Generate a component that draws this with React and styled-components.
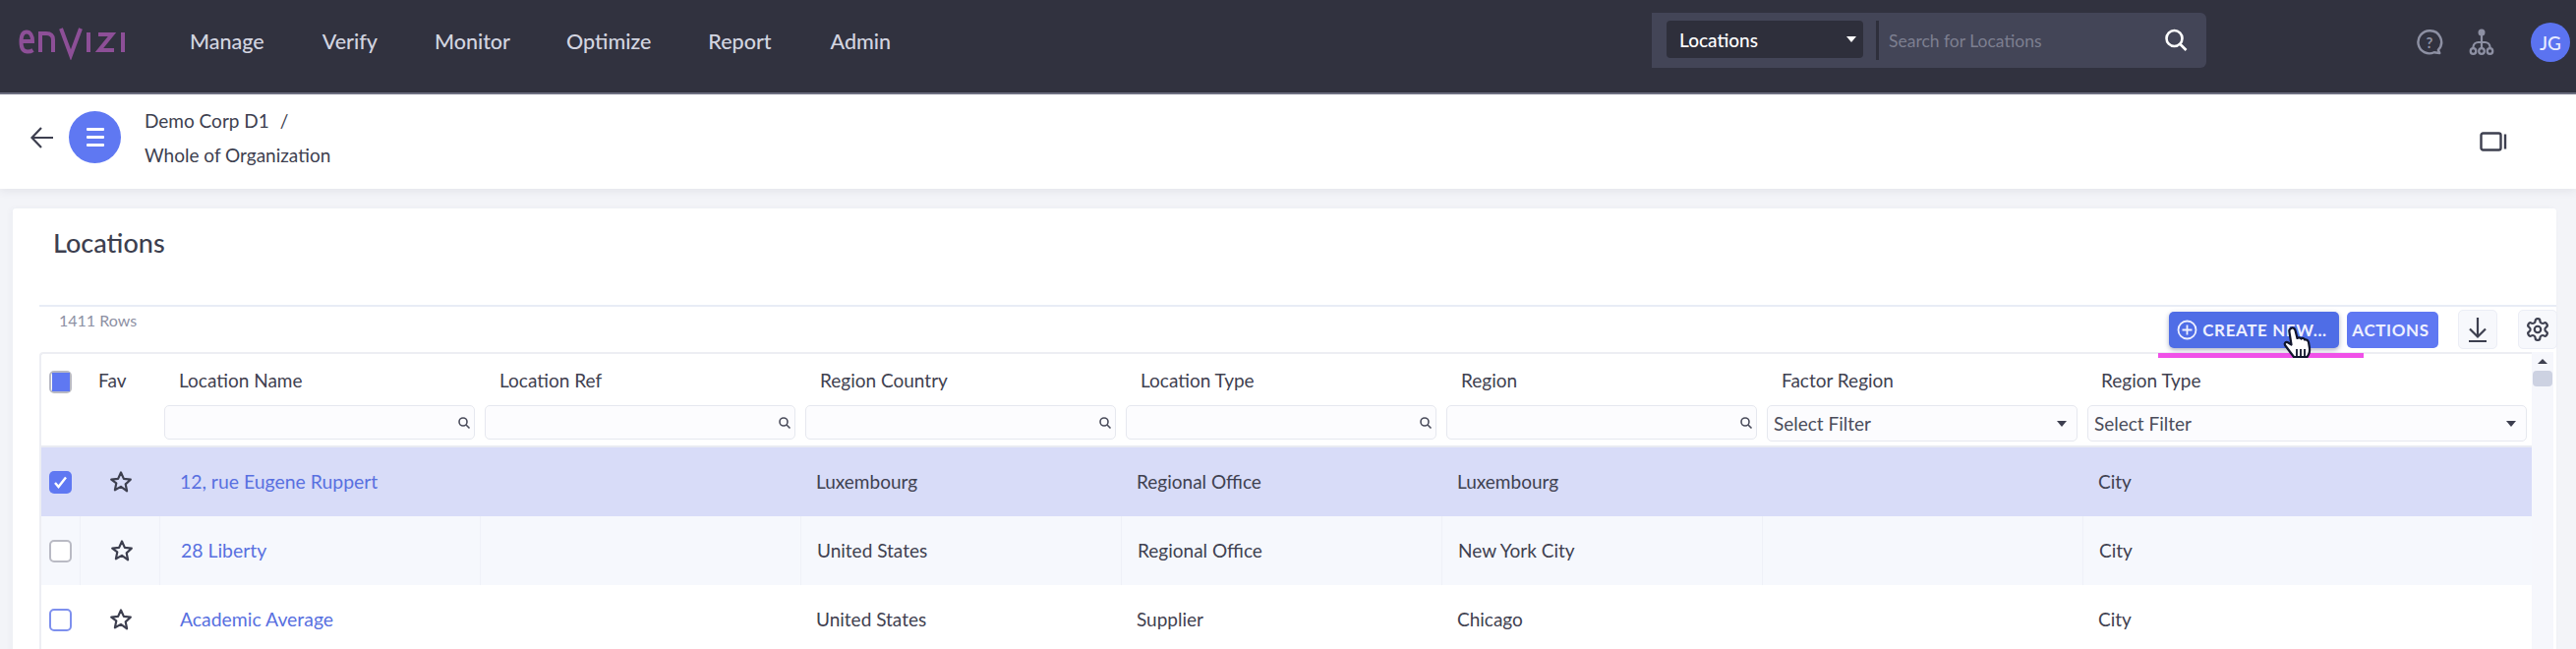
import React from "react";
import styled, { createGlobalStyle } from "styled-components";

const Global = createGlobalStyle`
  html, body { margin: 0; padding: 0; background: #f3f4f8; overflow: hidden; }
  body { font-family: "Lato", "Open Sans", sans-serif; color: #3d3f4f; }
  * { box-sizing: border-box; }
`;

const Page = styled.div`
  width: 2620px;
  height: 660px;
  overflow: hidden;
  position: relative;
`;

const TopBar = styled.header`
  height: 96px;
  background: #31323f;
  border-bottom: 2px solid #6d6f80;
  display: flex;
  align-items: flex-start;
  padding: 13px 7px 0 18px;
`;

const Logo = styled.svg`
  width: 112px;
  height: 34px;
  margin-top: 14px;
  flex: none;
`;

const Nav = styled.nav`
  display: flex;
  margin-left: 63px;
  margin-top: 16px;
  width: 1488px;
  flex: none;
`;

const NavItem = styled.a`
  font-size: 21.5px;
  font-weight: 500;
  color: #d3d5e0;
  margin-right: ${(p) => p.$gap}px;
`;

const SearchBox = styled.div`
  width: 564px;
  height: 56px;
  background: #434557;
  border-radius: 0 6px 6px 0;
  display: flex;
  align-items: flex-start;
  padding: 8px 0 0 15px;
  flex: none;
  margin-left: -1px;
`;

const ScopeSelect = styled.div`
  width: 200px;
  height: 38px;
  background: #2e2f3b;
  border-radius: 4px;
  display: flex;
  align-items: center;
  justify-content: space-between;
  padding: 0 7px 0 13px;
  color: #fff;
  font-size: 19px;
  font-weight: 500;
`;

const Caret = styled.span`
  width: 0;
  height: 0;
  border-left: ${(p) => p.$size}px solid transparent;
  border-right: ${(p) => p.$size}px solid transparent;
  border-top: ${(p) => p.$size + 1}px solid ${(p) => p.$color};
`;

const SearchDivider = styled.span`
  width: 3px;
  height: 40px;
  background: #2e2f3b;
  margin-left: 13px;
  flex: none;
`;

const Placeholder = styled.span`
  font-size: 17.5px;
  color: #7d7f90;
  margin-left: 10px;
  margin-top: 10px;
  width: 278px;
  flex: none;
`;

const SearchIcon = styled.svg`
  width: 28px;
  height: 28px;
  margin-top: 6px;
  flex: none;
`;

const TopIcons = styled.div`
  display: flex;
  align-items: center;
  margin-left: 213px;
  margin-top: 10px;
  height: 40px;
  flex: none;
`;

const TopIcon = styled.svg`
  width: ${(p) => p.$size}px;
  height: ${(p) => p.$size}px;
  margin-right: ${(p) => p.$gap}px;
  flex: none;
`;

const Avatar = styled.div`
  width: 40px;
  height: 40px;
  border-radius: 50%;
  background: #5b73f0;
  color: #e8ebff;
  font-size: 19px;
  font-weight: 500;
  display: flex;
  align-items: center;
  justify-content: center;
`;

const SubBar = styled.section`
  height: 96px;
  background: #fff;
  box-shadow: 0 3px 8px rgba(60, 64, 90, 0.08);
  display: flex;
  align-items: flex-start;
  padding: 0 70px 0 30px;
  position: relative;
`;

const BackIcon = styled.svg`
  width: 26px;
  height: 26px;
  margin-top: 31px;
  flex: none;
`;

const MenuCircle = styled.div`
  width: 53px;
  height: 53px;
  border-radius: 50%;
  background: #5f78f2;
  margin: 17px 0 0 14px;
  display: flex;
  flex-direction: column;
  align-items: center;
  justify-content: center;
  gap: 5px;
  flex: none;
`;

const MenuLine = styled.span`
  width: 18px;
  height: 3px;
  border-radius: 1px;
  background: #fff;
`;

const Crumbs = styled.div`
  margin-left: 24px;
  margin-top: 15px;
  font-size: 19px;
  display: flex;
  flex-direction: column;
  gap: 12px;
  line-height: 23px;
  color: #3d3f4f;
  flex: 1;
`;

const Slash = styled.span`
  margin-left: 11px;
`;

const VideoIcon = styled.svg`
  width: 28px;
  height: 20px;
  margin-top: 38px;
  flex: none;
`;

const Card = styled.main`
  margin: 20px 20px 0 13px;
  background: #fff;
  border-radius: 3px;
  padding: 19px 0 0 27px;
  height: 460px;
  box-shadow: -2px 0 6px rgba(60, 64, 90, 0.04);
`;

const Title = styled.h1`
  margin: 0 0 0 14px;
  font-size: 27px;
  font-weight: 500;
  line-height: 32px;
  color: #3d3f4f;
  height: 79px;
`;

const Toolbar = styled.div`
  border-top: 2px solid #e8ecf6;
  height: 48px;
  width: 2560px;
  display: flex;
  align-items: flex-start;
  position: relative;
  z-index: 2;
`;

const RowCount = styled.span`
  font-size: 16px;
  color: #8d90a3;
  margin: 4px 0 0 20px;
  width: 2146px;
  flex: none;
`;

const PrimaryButton = styled.button`
  height: 37px;
  width: ${(p) => p.$width}px;
  margin: 5px 8px 0 0;
  border: 0;
  border-radius: 5px;
  background: ${(p) => (p.$hover ? "#4f6de6" : "#5f78f2")};
  color: #eef0ff;
  font: 700 17px "Lato", sans-serif;
  letter-spacing: 0.6px;
  display: flex;
  align-items: center;
  justify-content: center;
  gap: 5px;
  padding: 0 4px 0 0;
  flex: none;
  box-shadow: ${(p) => (p.$hover ? "0 2px 5px rgba(30,40,90,.35)" : "none")};
`;

const IconButton = styled.button`
  width: 40px;
  height: 40px;
  margin: 3px 0 0 ${(p) => p.$gap}px;
  border: 1px solid #eceef6;
  border-radius: 5px;
  background: #f7f8fc;
  display: flex;
  align-items: center;
  justify-content: center;
  padding: 0;
  flex: none;
`;

const TableWrap = styled.div`
  display: flex;
  width: 2557px;
`;

const Table = styled.div`
  width: 2535px;
  border: 1px solid #edeef3;
  border-width: 2px 0 0 2px;
  border-radius: 4px 0 0 0;
  flex: none;
`;

const columns = "39px 81px 326px 326px 326px 326px 326px 326px 1fr";

const HeadRow = styled.div`
  display: grid;
  grid-template-columns: ${columns};
  height: 95px;
  border-bottom: 2px solid #e9ebf2;
`;

const HeadCell = styled.div`
  position: relative;
  display: flex;
  flex-direction: column;
  padding: ${(p) => p.$pad || "0 5px"};
`;

const HeadLabel = styled.span`
  font-size: 19px;
  line-height: 24px;
  margin-top: 15px;
  margin-left: ${(p) => p.$indent ?? 15}px;
  color: #3f4150;
  height: 37px;
  flex: none;
`;

const FilterInput = styled.div`
  height: ${(p) => (p.$select ? 37 : 35)}px;
  border: 1px solid #e6e8ef;
  border-radius: 5px;
  background: #fcfcfe;
  display: flex;
  align-items: center;
  justify-content: ${(p) => (p.$select ? "space-between" : "flex-end")};
  padding: ${(p) => (p.$select ? "0 10px 0 6px" : "0 3px 0 0")};
  font-size: 19px;
  color: #4a4c5b;
`;

const DataRow = styled.div`
  display: grid;
  grid-template-columns: ${columns};
  height: 70px;
  background: ${(p) => p.$bg};
`;

const Cell = styled.div`
  display: flex;
  align-items: center;
  padding-left: ${(p) => p.$pad ?? 16}px;
  padding-bottom: ${(p) => p.$lift ?? 2}px;
  font-size: 19px;
  color: #3f4150;
  border-left: ${(p) => (p.$line ? "1px solid #eff1f8" : "0")};
`;

const NameLink = styled.a`
  color: #5870e0;
  font-size: 19.4px;
`;

const Check = styled.span`
  width: 23px;
  height: 23px;
  border-radius: 5px;
  border: ${(p) => p.$border};
  background: ${(p) => p.$fill};
  display: flex;
  align-items: center;
  justify-content: center;
  flex: none;
`;

const MixedFill = styled.span`
  width: 18px;
  height: 19px;
  background: #5f78f2;
`;

const ScrollTrack = styled.div`
  width: 22px;
  background: #f6f7fc;
  display: flex;
  flex-direction: column;
  align-items: center;
  padding-top: 7px;
  flex: none;
`;

const ScrollUp = styled.span`
  width: 0;
  height: 0;
  border-left: 5px solid transparent;
  border-right: 5px solid transparent;
  border-bottom: 5px solid #3f4150;
`;

const ScrollThumb = styled.span`
  width: 20px;
  height: 16px;
  margin-top: 7px;
  border-radius: 4px;
  background: #cdd2e2;
`;

const PinkLine = styled.span`
  position: absolute;
  left: 2195px;
  top: 359px;
  width: 209px;
  height: 5px;
  background: #f050e8;
  z-index: 3;
`;

const Cursor = styled.svg`
  position: absolute;
  left: 2321px;
  top: 331px;
  width: 34px;
  height: 38px;
  z-index: 4;
`;

const navItems = [
  ["Manage", 59],
  ["Verify", 58],
  ["Monitor", 57],
  ["Optimize", 58],
  ["Report", 60],
  ["Admin", 0],
];

const filterCols = ["Location Name", "Location Ref", "Region Country", "Location Type", "Region"];

const rows = [
  { name: "12, rue Eugene Ruppert", country: "Luxembourg", type: "Regional Office", region: "Luxembourg", bg: "#d8dcf8", selected: true },
  { name: "28 Liberty", country: "United States", type: "Regional Office", region: "New York City", bg: "#f6f8fd", line: true, border: "2px solid #b9bac4" },
  { name: "Academic Average", country: "United States", type: "Supplier", region: "Chicago", bg: "#ffffff", border: "2px solid #7e90ee" },
];

const Star = () => (
  <svg width="24" height="24" viewBox="0 0 24 24" fill="none" stroke="#3d3f4f" strokeWidth="2.2" strokeLinejoin="round">
    <path d="M12 2.5l2.9 6.4 6.9.8-5.1 4.7 1.4 6.9L12 16.9l-6.1 3.4 1.4-6.9L2.2 9.7l6.9-.8z" />
  </svg>
);

const MiniSearch = () => (
  <svg width="14" height="14" viewBox="0 0 14 14" fill="none" stroke="#4a4c5b" strokeWidth="1.6">
    <circle cx="6" cy="6" r="4" />
    <path d="M9 9l3.5 3.5" />
  </svg>
);

export default function App() {
  return (
    <Page>
      <Global />
      <TopBar>
        <Logo viewBox="0 0 112 34" fill="none" stroke="#8d4f97" strokeWidth="4">
          <path d="M4 15h11c0-6-2.300-9.500-6-9.500S3.500 9 3.500 15.500 6 25.500 10 25.500c2.500 0 4-.5 5.500-1.500" />
          <path d="M23 26V7h6c4.500 0 7 2 7 6.500V26" />
          <path d="M44 2l10 27L64 2" strokeLinejoin="miter" />
          <path d="M72 6v20" />
          <path d="M82 8h14L83 24h15" />
          <path d="M107 6v20" />
        </Logo>
        <Nav>
          {navItems.map(([label, gap]) => (
            <NavItem key={label} $gap={gap}>{label}</NavItem>
          ))}
        </Nav>
        <SearchBox>
          <ScopeSelect>
            Locations
            <Caret $size={5} $color="#fff" />
          </ScopeSelect>
          <SearchDivider />
          <Placeholder>Search for Locations</Placeholder>
          <SearchIcon viewBox="0 0 28 28" fill="none" stroke="#fff" strokeWidth="2.600">
            <circle cx="12.500" cy="12" r="8" />
            <path d="M18.500 18l6 6" />
          </SearchIcon>
        </SearchBox>
        <TopIcons>
          <TopIcon $size={28} $gap={24} viewBox="0 0 30 30" fill="none" stroke="#8d90a3" strokeWidth="2.600">
            <path d="M15 2.500a12.300 12.300 0 1 0 5 23.500l6 .8-1.500-3.500A12.300 12.300 0 0 0 15 2.500z" strokeLinejoin="round" />
            <text x="15" y="21" textAnchor="middle" fontSize="16" fontWeight="700" fill="#8d90a3" stroke="none" fontFamily="Lato">?</text>
          </TopIcon>
          <TopIcon $size={30} $gap={35} viewBox="0 0 30 30" fill="none" stroke="#8d90a3" strokeWidth="2.200">
            <circle cx="15" cy="5" r="3.500" fill="#8d90a3" stroke="none" />
            <path d="M15 8v13M6.500 21v-1.500a5 5 0 0 1 5-4.500h7a5 5 0 0 1 5 4.500V21" />
            <circle cx="6.500" cy="24" r="2.800" />
            <circle cx="15" cy="24" r="2.800" />
            <circle cx="23.500" cy="24" r="2.800" />
          </TopIcon>
          <Avatar>JG</Avatar>
        </TopIcons>
      </TopBar>
      <SubBar>
        <BackIcon viewBox="0 0 26 26" fill="none" stroke="#3d3f4f" strokeWidth="2.200">
          <path d="M24 13H3M12 3L2.500 13 12 23" />
        </BackIcon>
        <MenuCircle>
          <MenuLine />
          <MenuLine />
          <MenuLine />
        </MenuCircle>
        <Crumbs>
          <span>Demo Corp D1<Slash>/</Slash></span>
          <span>Whole of Organization</span>
        </Crumbs>
        <VideoIcon viewBox="0 0 28 20" fill="none" stroke="#3d3f4f" strokeWidth="2.400">
          <rect x="1.500" y="1.500" width="20" height="17" rx="2" />
          <path d="M26 2.500v15" />
        </VideoIcon>
      </SubBar>
      <Card>
        <Title>Locations</Title>
        <Toolbar>
          <RowCount>1411 Rows</RowCount>
          <PrimaryButton $hover $width={173}>
            <svg width="21" height="21" viewBox="0 0 21 21" fill="none" stroke="#eef0ff" strokeWidth="1.800">
              <circle cx="10.500" cy="10.500" r="9" />
              <path d="M10.500 5.500v10M5.500 10.500h10" />
            </svg>
            CREATE NEW...
          </PrimaryButton>
          <PrimaryButton $width={93}>ACTIONS</PrimaryButton>
          <IconButton $gap={12}>
            <svg width="24" height="28" viewBox="0 0 24 28" fill="none" stroke="#3d3f4f" strokeWidth="2.200">
              <path d="M12 2v19M4 13.500l8 8 8-8M3 26h18" />
            </svg>
          </IconButton>
          <IconButton $gap={21}>
            <svg width="26" height="26" viewBox="0 0 24 24" fill="none" stroke="#3d3f4f" strokeWidth="2" strokeLinecap="round" strokeLinejoin="round">
              <path d="M12.220 2h-.44a2 2 0 0 0-2 2v.18a2 2 0 0 1-1 1.730l-.43.250a2 2 0 0 1-2 0l-.150-.080a2 2 0 0 0-2.730.730l-.220.380a2 2 0 0 0 .730 2.730l.150.100a2 2 0 0 1 1 1.720v.510a2 2 0 0 1-1 1.740l-.150.090a2 2 0 0 0-.730 2.730l.220.380a2 2 0 0 0 2.730.730l.150-.080a2 2 0 0 1 2 0l.430.250a2 2 0 0 1 1 1.730V20a2 2 0 0 0 2 2h.44a2 2 0 0 0 2-2v-.18a2 2 0 0 1 1-1.730l.430-.250a2 2 0 0 1 2 0l.150.080a2 2 0 0 0 2.730-.730l.220-.390a2 2 0 0 0-.730-2.730l-.150-.080a2 2 0 0 1-1-1.740v-.500a2 2 0 0 1 1-1.740l.150-.090a2 2 0 0 0 .730-2.730l-.220-.380a2 2 0 0 0-2.730-.730l-.150.080a2 2 0 0 1-2 0l-.430-.250a2 2 0 0 1-1-1.730V4a2 2 0 0 0-2-2z" />
              <circle cx="12" cy="12" r="3" />
            </svg>
          </IconButton>
        </Toolbar>
        <TableWrap>
          <Table>
            <HeadRow>
              <HeadCell $pad="17px 0 0 8px">
                <Check $border="2px solid #b9bac4" $fill="#fff"><MixedFill /></Check>
              </HeadCell>
              <HeadCell $pad="0">
                <HeadLabel $indent={19}>Fav</HeadLabel>
              </HeadCell>
              {filterCols.map((c) => (
                <HeadCell key={c}>
                  <HeadLabel>{c}</HeadLabel>
                  <FilterInput><MiniSearch /></FilterInput>
                </HeadCell>
              ))}
              <HeadCell>
                <HeadLabel>Factor Region</HeadLabel>
                <FilterInput $select>Select Filter<Caret $size={5} $color="#3d3f4f" /></FilterInput>
              </HeadCell>
              <HeadCell>
                <HeadLabel $indent={14}>Region Type</HeadLabel>
                <FilterInput $select>Select Filter<Caret $size={5} $color="#3d3f4f" /></FilterInput>
              </HeadCell>
            </HeadRow>
            {rows.map((r) => (
              <DataRow key={r.name} $bg={r.bg}>
                <Cell $pad={8} $lift={0}>
                  {r.selected ? (
                    <Check $border="0" $fill="#5f78f2">
                      <svg width="15" height="15" viewBox="0 0 15 15" fill="none" stroke="#fff" strokeWidth="2.400">
                        <path d="M2 8l3.500 4L13 2.500" />
                      </svg>
                    </Check>
                  ) : (
                    <Check $border={r.border} $fill="#fff" />
                  )}
                </Cell>
                <Cell $pad={30} $lift={0} $line={r.line}><Star /></Cell>
                <Cell $pad={21} $line={r.line}><NameLink>{r.name}</NameLink></Cell>
                <Cell $line={r.line} />
                <Cell $line={r.line}>{r.country}</Cell>
                <Cell $line={r.line}>{r.type}</Cell>
                <Cell $line={r.line}>{r.region}</Cell>
                <Cell $line={r.line} />
                <Cell $line={r.line}>City</Cell>
              </DataRow>
            ))}
          </Table>
          <ScrollTrack>
            <ScrollUp />
            <ScrollThumb />
          </ScrollTrack>
        </TableWrap>
      </Card>
      <PinkLine />
      <Cursor viewBox="0 0 34 38">
        <path d="M9 3c2-1.500 4 0 4.500 2l2 8c1-1 3-1 4 .5 1-1 3-.5 3.500 1 1.500-.5 3.500.5 4 2.500l1 6c.5 3-1 7-2.500 9H12L3 20c-1-1.500.5-3.500 2.500-3l4 2.500L7.500 7C7 5 8 3.500 9 3z" fill="#fff" stroke="#10152c" strokeWidth="2.200" strokeLinejoin="round" />
        <path d="M15 24v7M19 24v7M23 24v7" stroke="#10152c" strokeWidth="1.800" />
      </Cursor>
    </Page>
  );
}
